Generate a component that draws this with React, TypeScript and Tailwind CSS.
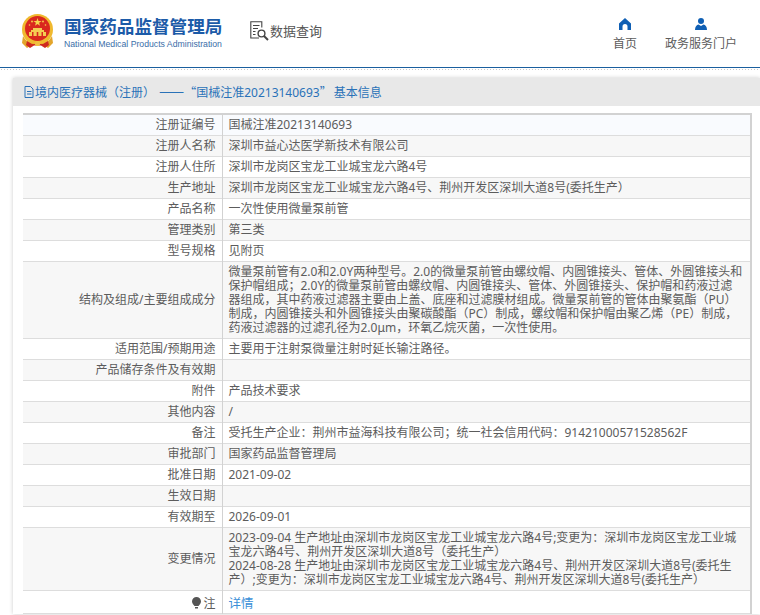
interface Row {
  label: string;
  value: string;
  tall?: string;
  link?: boolean;
  hint?: boolean;
}

const rows: Row[] = [
  { label: "注册证编号", value: "国械注准20213140693" },
  { label: "注册人名称", value: "深圳市益心达医学新技术有限公司" },
  { label: "注册人住所", value: "深圳市龙岗区宝龙工业城宝龙六路4号" },
  { label: "生产地址", value: "深圳市龙岗区宝龙工业城宝龙六路4号、荆州开发区深圳大道8号(委托生产）" },
  { label: "产品名称", value: "一次性使用微量泵前管" },
  { label: "管理类别", value: "第三类" },
  { label: "型号规格", value: "见附页" },
  {
    label: "结构及组成/主要组成成分",
    tall: "h-[72px]",
    value:
      "微量泵前管有2.0和2.0Y两种型号。2.0的微量泵前管由螺纹帽、内圆锥接头、管体、外圆锥接头和保护帽组成；2.0Y的微量泵前管由螺纹帽、内圆锥接头、管体、外圆锥接头、保护帽和药液过滤器组成，其中药液过滤器主要由上盖、底座和过滤膜材组成。微量泵前管的管体由聚氨酯（PU）制成，内圆锥接头和外圆锥接头由聚碳酸酯（PC）制成，螺纹帽和保护帽由聚乙烯（PE）制成，药液过滤器的过滤孔径为2.0μm，环氧乙烷灭菌，一次性使用。",
  },
  { label: "适用范围/预期用途", value: "主要用于注射泵微量注射时延长输注路径。" },
  { label: "产品储存条件及有效期", value: "" },
  { label: "附件", value: "产品技术要求" },
  { label: "其他内容", value: "/" },
  { label: "备注", value: "受托生产企业：荆州市益海科技有限公司；统一社会信用代码：91421000571528562F" },
  { label: "审批部门", value: "国家药品监督管理局" },
  { label: "批准日期", value: "2021-09-02" },
  { label: "生效日期", value: "" },
  { label: "有效期至", value: "2026-09-01" },
  {
    label: "变更情况",
    value:
      "2023-09-04 生产地址由深圳市龙岗区宝龙工业城宝龙六路4号;变更为：深圳市龙岗区宝龙工业城宝龙六路4号、荆州开发区深圳大道8号（委托生产）\n2024-08-28 生产地址由深圳市龙岗区宝龙工业城宝龙六路4号、荆州开发区深圳大道8号(委托生产）;变更为：深圳市龙岗区宝龙工业城宝龙六路4号、荆州开发区深圳大道8号(委托生产）",
  },
  { label: "注", value: "详情", link: true, hint: true, tall: "h-[23px] pt-[5px] pb-[1px]" },
];

function rowBg(i: number) {
  if (i === 0) return "bg-[#f9fbfe]";
  return i % 2 === 1 ? "bg-[#f7f7f7]" : "bg-white";
}

function Emblem() {
  return (
    <svg width="33" height="35" viewBox="0 0 33 35">
      <circle cx="16.5" cy="15.5" r="15.5" fill="#f0b92e" />
      <circle cx="16.5" cy="14.5" r="12.5" fill="#d9281e" />
      <polygon points="16.5,4 17.5,7 20.6,7 18.1,8.8 19,11.8 16.5,10 14,11.8 14.9,8.8 12.4,7 15.5,7" fill="#f7d44c" />
      <circle cx="11" cy="7.5" r="0.9" fill="#f7d44c" />
      <circle cx="22" cy="7.5" r="0.9" fill="#f7d44c" />
      <circle cx="8.5" cy="11" r="0.8" fill="#f7d44c" />
      <circle cx="24.5" cy="11" r="0.8" fill="#f7d44c" />
      <path d="M12 14h9v2h2v2h2v4H8v-4h2v-2h2z" fill="#f4cc52" />
      <path d="M11 18h1.5v4H11zM15.7 18h1.6v4h-1.6zM20.5 18H22v4h-1.5z" fill="#d9281e" />
      <path d="M2 22c3 6 8 8 14.5 8S28 28 31 22l1 7-5 5-6-4h-9l-6 4-5-5z" fill="#e3a52b" />
      <path d="M6 27l5 3h11l5-3 1 4-4 3-4-2.500h-7L9 34l-4-3z" fill="#cf2a1f" />
      <circle cx="16.500" cy="29.500" r="2.600" fill="#f0c040" />
    </svg>
  );
}

function SearchDoc() {
  return (
    <svg width="20" height="20" viewBox="0 0 20 20" fill="none" stroke="#444" strokeWidth="1.1">
      <path d="M9 17H.800V.800h11v5.700" />
      <path d="M3 4.500h6.500M3 7.500h5M3 10.500h2.500M3 13.500h2.500" />
      <circle cx="11.500" cy="12.500" r="3.400" strokeWidth="1.400" />
      <path d="M14 15l4 4" strokeWidth="2" />
    </svg>
  );
}

function HomeIcon() {
  return (
    <svg width="12" height="12" viewBox="0 0 12 12" fill="#0f5fb4">
      <path d="M6 0L12 5.500V12H8.500V8.500a2.500 2.500 0 0 0-5 0V12H0V5.500z" />
    </svg>
  );
}

function PersonIcon() {
  return (
    <svg width="12" height="12" viewBox="0 0 12 12" fill="#0f5fb4">
      <circle cx="6" cy="3" r="3" />
      <path d="M3.500 6.500L6 8l2.500-1.500C10.500 7 12 8.500 12 12H0c0-3.500 1.500-5 3.500-5.500z" />
    </svg>
  );
}

function FileIcon() {
  return (
    <svg width="10" height="12" viewBox="0 0 10 12" fill="none" stroke="#2a72b8" strokeWidth="1">
      <path d="M1 .500h5.500L9 3v8.500H1z" />
      <path d="M3 5.500h4.500M3 8h4.500" />
    </svg>
  );
}

function BulbIcon() {
  return (
    <svg width="9" height="12" viewBox="0 0 9 12" fill="#555" className="inline-block mr-[2px] align-[-1px]">
      <path d="M4.500 0a4.500 4.500 0 0 1 4.500 4.500c0 2-1.500 3-2.500 4.500h-4C1.500 7.500 0 6.500 0 4.500A4.500 4.500 0 0 1 4.500 0z" />
      <path d="M3 10h3v1.500H3z" />
    </svg>
  );
}

export default function App() {
  return (
    <div className="w-[760px] h-[615px] overflow-hidden bg-white text-[12px] leading-[14px] text-[#5c5c5c] [text-spacing-trim:space-all] font-['Noto_Sans','Noto_Sans_CJK_SC',sans-serif]">
      <header className="h-[68px] flex items-center border-b border-[#1a5f9e]">
        <div className="ml-[21px] -mt-[4px]">
          <Emblem />
        </div>
        <div className="ml-[10px] -mt-[3px] w-[160px]">
          <div className="text-[17.6px] leading-[22px] font-bold text-[#1c5ba8]">国家药品监督管理局</div>
          <div className="text-[8.7px] leading-[11px] mt-[2px] text-[#3a6ea8] font-['Liberation_Sans',sans-serif] whitespace-nowrap">
            National Medical Products Administration
          </div>
        </div>
        <div className="ml-[26px] -mt-[5px] flex items-center">
          <SearchDoc />
          <span className="text-[13px] text-[#555]">数据查询</span>
        </div>
        <nav className="ml-auto mr-[23px] mt-[2px] flex gap-[28px]">
          <div className="flex flex-col items-center gap-[7px]">
            <HomeIcon />
            <span>首页</span>
          </div>
          <div className="flex flex-col items-center gap-[7px]">
            <PersonIcon />
            <span>政务服务门户</span>
          </div>
        </nav>
      </header>
      <div className="h-[4px] bg-[radial-gradient(#c8c8c8_0.5px,transparent_0.6px)] bg-[length:3px_3px]" />
      <div className="h-[6px]" />
      <main className="ml-[13px] shadow-[0_0_4px_#ccc] bg-white">
        <h2 className="h-[28px] bg-[#e8e8e8] flex items-center gap-px pl-[11px] text-[#2a72b8] font-normal">
          <FileIcon />
          <span>
            境内医疗器械（注册）
            <span className="font-['Noto_Sans_CJK_SC',sans-serif] text-[15px] ml-[4px]">——</span>
            <span className="font-['Noto_Sans_CJK_SC',sans-serif]">“</span>国械注准20213140693
            <span className="font-['Noto_Sans_CJK_SC',sans-serif] mr-[2px]">”</span>基本信息
          </span>
        </h2>
        <div className="pt-[7px] pl-[10px] pr-[8px]">
          <table className="w-full border-collapse table-fixed border-t-2 border-r-2 border-[#d2d2d2]">
            <tbody>
              {rows.map((r, i) => (
                <tr key={r.label} className={"border-b border-[#ddd] " + rowBg(i)}>
                  <td className={"w-[199px] py-[3px] pr-[6px] text-right align-middle border-r border-[#d2d2d2] " + (r.hint ? "pt-[5px] pb-[1px]" : "")}>
                    {r.hint && <BulbIcon />}
                    {r.label}
                  </td>
                  <td className={"py-[3px] pl-[6px] pr-[7px] whitespace-pre-line " + (r.tall ?? "h-[21px]")}>
                    {r.link ? <a className="text-[12.500px] text-[#3a8fd8]">{r.value}</a> : r.value}
                  </td>
                </tr>
              ))}
            </tbody>
          </table>
        </div>
      </main>
    </div>
  );
}
